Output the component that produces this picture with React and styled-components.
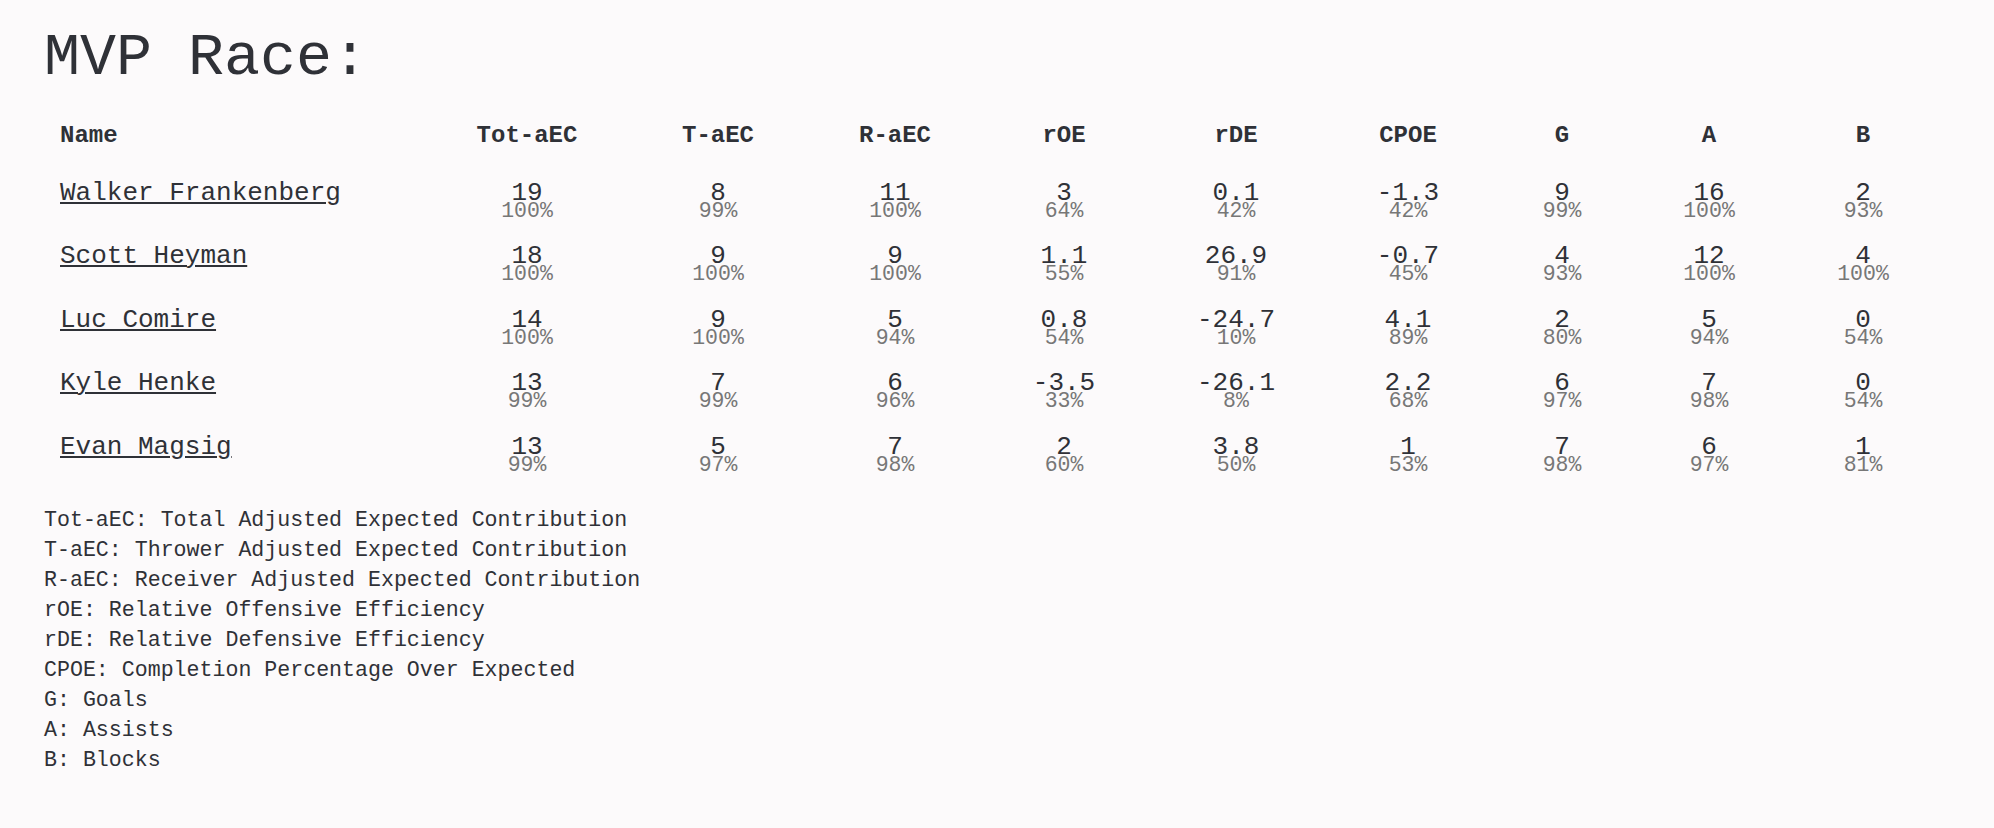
import React from "react";
import styled, { createGlobalStyle } from "styled-components";

const GlobalStyle = createGlobalStyle`
  html, body {
    margin: 0;
    padding: 0;
    background-color: #fcfafb;
    color: #2f3137;
    font-family: "Liberation Mono", "DejaVu Sans Mono", monospace;
  }
`;

const Page = styled.div`
  min-height: 828px;
  box-sizing: border-box;
  padding: 24px 58px 0 44px;
`;

const Title = styled.h1`
  margin: 0;
  font-size: 60px;
  line-height: 68px;
  font-weight: normal;
`;

const COLUMNS = "388px 190px 192px 162px 176px 168px 176px 132px 162px 146px";

const Row = styled.div`
  display: grid;
  grid-template-columns: ${COLUMNS};
  align-items: start;
  padding: ${(p) => (p.$head ? "30px 0 20.5px" : "14px 0 14.5px")};
`;

const HeadCell = styled.div`
  font-size: 24px;
  line-height: 28px;
  font-weight: bold;
  text-align: ${(p) => (p.$left ? "left" : "center")};
  padding-left: ${(p) => (p.$left ? "16px" : "0")};
`;

const NameCell = styled.div`
  padding-left: 16px;
`;

const NameLink = styled.a`
  color: #2f3137;
  font-size: 26px;
  line-height: 17px;
  text-decoration: underline;
  text-decoration-thickness: 2px;
  text-underline-offset: 2px;
`;

const StatCell = styled.div`
  display: flex;
  flex-direction: column;
  align-items: center;
`;

const Value = styled.span`
  font-size: 26px;
  line-height: 17px;
`;

const Pct = styled.span`
  font-size: 21.5px;
  line-height: 18px;
  color: #777777;
`;

const Legend = styled.div`
  margin-top: 17px;
  font-size: 21.6px;
  line-height: 30px;
`;

const headers = ["Tot-aEC", "T-aEC", "R-aEC", "rOE", "rDE", "CPOE", "G", "A", "B"];

const players = [
  {
    name: "Walker Frankenberg",
    stats: [["19", "100%"], ["8", "99%"], ["11", "100%"], ["3", "64%"], ["0.1", "42%"], ["-1.3", "42%"], ["9", "99%"], ["16", "100%"], ["2", "93%"]],
  },
  {
    name: "Scott Heyman",
    stats: [["18", "100%"], ["9", "100%"], ["9", "100%"], ["1.1", "55%"], ["26.9", "91%"], ["-0.7", "45%"], ["4", "93%"], ["12", "100%"], ["4", "100%"]],
  },
  {
    name: "Luc Comire",
    stats: [["14", "100%"], ["9", "100%"], ["5", "94%"], ["0.8", "54%"], ["-24.7", "10%"], ["4.1", "89%"], ["2", "80%"], ["5", "94%"], ["0", "54%"]],
  },
  {
    name: "Kyle Henke",
    stats: [["13", "99%"], ["7", "99%"], ["6", "96%"], ["-3.5", "33%"], ["-26.1", "8%"], ["2.2", "68%"], ["6", "97%"], ["7", "98%"], ["0", "54%"]],
  },
  {
    name: "Evan Magsig",
    stats: [["13", "99%"], ["5", "97%"], ["7", "98%"], ["2", "60%"], ["3.8", "50%"], ["1", "53%"], ["7", "98%"], ["6", "97%"], ["1", "81%"]],
  },
];

const legend = [
  "Tot-aEC: Total Adjusted Expected Contribution",
  "T-aEC: Thrower Adjusted Expected Contribution",
  "R-aEC: Receiver Adjusted Expected Contribution",
  "rOE: Relative Offensive Efficiency",
  "rDE: Relative Defensive Efficiency",
  "CPOE: Completion Percentage Over Expected",
  "G: Goals",
  "A: Assists",
  "B: Blocks",
];

const App = () => {
  return (
    <Page>
      <GlobalStyle />
      <Title>MVP Race:</Title>
      <Row $head>
        <HeadCell $left>Name</HeadCell>
        {headers.map((h) => (
          <HeadCell key={h}>{h}</HeadCell>
        ))}
      </Row>
      {players.map((p) => (
        <Row key={p.name}>
          <NameCell>
            <NameLink href="#">{p.name}</NameLink>
          </NameCell>
          {p.stats.map(([v, pct], i) => (
            <StatCell key={i}>
              <Value>{v}</Value>
              <Pct>{pct}</Pct>
            </StatCell>
          ))}
        </Row>
      ))}
      <Legend>
        {legend.map((l) => (
          <div key={l}>{l}</div>
        ))}
      </Legend>
    </Page>
  );
};

export default App;
